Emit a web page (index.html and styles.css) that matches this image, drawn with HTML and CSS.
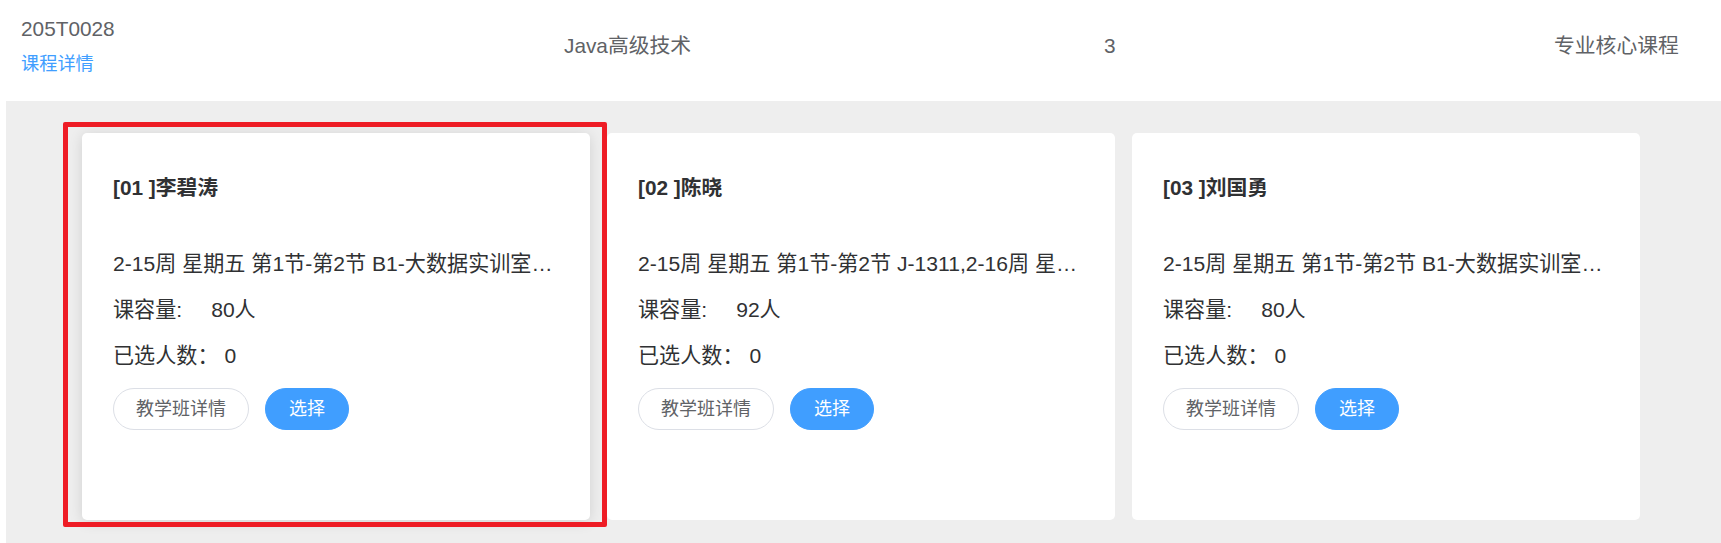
FILE: index.html
```html
<!DOCTYPE html>
<html lang="zh-CN">
<head>
<meta charset="utf-8">
<title>课程选择</title>
<link rel="stylesheet" href="styles.css">
</head>
<body>
<div class="page">
  <div class="course-row">
    <div class="cell cell-code">
      <div class="code">205T0028</div>
      <a class="link" href="#">课程详情</a>
    </div>
    <div class="cell">Java高级技术</div>
    <div class="cell">3</div>
    <div class="cell">专业核心课程</div>
  </div>
  <div class="classes">
    <div class="card card-active">
      <div class="title">[01 ]李碧涛</div>
      <div class="line sched">2-15周 星期五 第1节-第2节 B1-大数据实训室…</div>
      <div class="line">课容量:<span class="val val-cap">80人</span></div>
      <div class="line">已选人数：<span class="val">0</span></div>
      <div class="actions">
        <button class="btn">教学班详情</button>
        <button class="btn btn-primary">选择</button>
      </div>
    </div>
    <div class="card">
      <div class="title">[02 ]陈晓</div>
      <div class="line sched">2-15周 星期五 第1节-第2节 J-1311,2-16周 星…</div>
      <div class="line">课容量:<span class="val val-cap">92人</span></div>
      <div class="line">已选人数：<span class="val">0</span></div>
      <div class="actions">
        <button class="btn">教学班详情</button>
        <button class="btn btn-primary">选择</button>
      </div>
    </div>
    <div class="card">
      <div class="title">[03 ]刘国勇</div>
      <div class="line sched">2-15周 星期五 第1节-第2节 B1-大数据实训室…</div>
      <div class="line">课容量:<span class="val val-cap">80人</span></div>
      <div class="line">已选人数：<span class="val">0</span></div>
      <div class="actions">
        <button class="btn">教学班详情</button>
        <button class="btn btn-primary">选择</button>
      </div>
    </div>
    <div class="highlight"></div>
  </div>
</div>
</body>
</html>
```
FILE: styles.css
```css
* { box-sizing: border-box; }
html, body { margin: 0; padding: 0; background: #ffffff; }
body {
  font-family: "Liberation Sans", Arial, "Noto Sans CJK SC", sans-serif;
  color: #303133;
  overflow: hidden;
  height: 543px;
}
.page {
  padding-left: 6px;
  display: flex;
  flex-direction: column;
  height: 543px;
}
.course-row {
  display: grid;
  grid-template-columns: 543px 540px 450px 1fr;
  align-items: center;
  padding: 15px 0 24px 15px;
  color: #606266;
  font-size: 20.8px;
}
.cell { line-height: 28px; }
.cell-code { display: flex; flex-direction: column; align-items: flex-start; }
.code { line-height: 28px; }
.link {
  margin-top: 8px;
  font-size: 18.2px;
  line-height: 26px;
  color: #409eff;
  text-decoration: none;
}
.classes {
  position: relative;
  flex: 1;
  background: #eeeeee;
  display: grid;
  grid-template-columns: repeat(3, 508px);
  column-gap: 17px;
  align-content: start;
  padding: 32px 0 0 76px;
}
.card {
  background: #ffffff;
  border-radius: 5px;
  height: 387px;
  padding: 35px 31px 0 31px;
  min-width: 0;
}
.card-active {
  box-shadow: 0 2px 14px 0 rgba(0, 0, 0, 0.12);
}
.title {
  font-size: 20.8px;
  font-weight: bold;
  line-height: 40px;
  color: #303133;
}
.line {
  font-size: 21.1px;
  line-height: 46px;
  color: #303133;
  white-space: nowrap;
}
.sched { margin-top: 33px; }
.val { margin-left: 6px; }
.val-cap { margin-left: 29px; }
.actions {
  display: flex;
  gap: 16px;
  margin-top: 9px;
}
.btn {
  font-family: "Liberation Sans", Arial, "Noto Sans CJK SC", sans-serif;
  font-size: 18px;
  height: 42px;
  line-height: 40px;
  padding: 0 22px;
  border-radius: 21px;
  border: 1px solid #dcdfe6;
  background: #ffffff;
  color: #606266;
  cursor: pointer;
}
.btn-primary {
  background: #409eff;
  border-color: #409eff;
  color: #ffffff;
  padding: 0 23px;
}
.highlight {
  position: absolute;
  left: 57px;
  top: 21px;
  width: 544px;
  height: 405px;
  border: 5px solid #ee1c25;
  border-radius: 2px;
  pointer-events: none;
}
```
